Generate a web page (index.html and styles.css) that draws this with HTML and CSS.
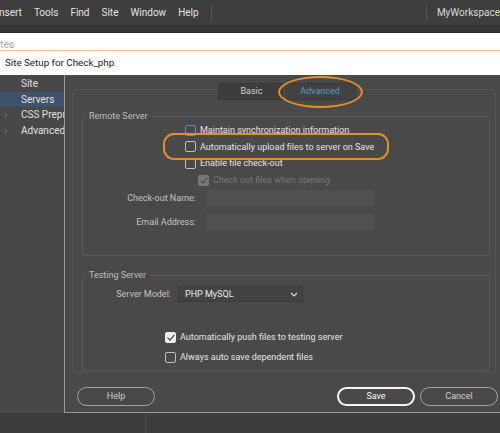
FILE: index.html
```html
<!DOCTYPE html>
<html>
<head>
<meta charset="utf-8">
<title>Site Setup for Check_php</title>
<link rel="stylesheet" href="styles.css">
</head>
<body>
	<div class="menubar">
		<span class="menu">nsert</span>
		<span class="menu">Tools</span>
		<span class="menu">Find</span>
		<span class="menu">Site</span>
		<span class="menu">Window</span>
		<span class="menu">Help</span>
		<span class="sep"></span>
		<span class="spacer"></span>
		<span class="sep"></span>
		<span class="workspace">MyWorkspace</span>
	</div>
	<div class="band"></div>
	<div class="panelname">tes</div>
	<div class="titlebar">Site Setup for Check_php</div>

	<div class="dialog">
		<ul class="sidebar">
			<li>Site</li>
			<li class="selected">Servers</li>
			<li><span class="chev">&#8250;</span>CSS Preprocessors</li>
			<li><span class="chev">&#8250;</span>Advanced Settings</li>
		</ul>

		<div class="main">
			<div class="tabpanel">
				<div class="tabs">
					<span class="tab">Basic</span>
					<span class="tab active">Advanced</span>
				</div>

				<fieldset class="group remote">
					<legend>Remote Server</legend>
					<div class="checks">
						<label class="check"><span class="box focus"></span>Maintain synchronization information</label>
						<label class="check"><span class="box"></span>Automatically upload files to server on Save</label>
						<label class="check"><span class="box"></span>Enable file check-out</label>
						<label class="check sub disabled"><span class="box on"></span>Check out files when opening</label>
					</div>
					<div class="field">
						<span class="fieldlabel">Check-out Name:</span>
						<span class="input"></span>
					</div>
					<div class="field">
						<span class="fieldlabel">Email Address:</span>
						<span class="input"></span>
					</div>
				</fieldset>

				<fieldset class="group testing">
					<legend>Testing Server</legend>
					<div class="field model">
						<span class="fieldlabel">Server Model:</span>
						<span class="select">PHP MySQL
							<svg width="8" height="5" viewBox="0 0 8 5"><path d="M1 1 L4 4 L7 1" fill="none" stroke="#ddd" stroke-width="1.2"/></svg>
						</span>
					</div>
					<div class="checks lower">
						<label class="check"><span class="box on"></span>Automatically push files to testing server</label>
						<label class="check"><span class="box"></span>Always auto save dependent files</label>
					</div>
				</fieldset>
			</div>

			<div class="buttons">
				<span class="btn">Help</span>
				<span class="grow"></span>
				<span class="btn primary">Save</span>
				<span class="btn">Cancel</span>
			</div>

			<!-- orange callouts drawn over the dialog -->
			<span class="mark mark-tab"></span>
			<span class="mark mark-upload"></span>
		</div>
	</div>

	<div class="footer">
		<span class="footleft"></span>
	</div>
</body>
</html>
```

FILE: styles.css
```css
html, body {
	margin: 0;
	padding: 0;
	width: 500px;
	height: 433px;
	overflow: hidden;
	background: #3d3d3d;
	font-family: Roboto, "Noto Sans", sans-serif;
}

.menubar {
	height: 25px;
	background: #3e3e3e;
	display: flex;
	align-items: center;
	color: #e2e2e2;
	font-size: 10px;
	white-space: nowrap;
}
.menu {
	margin-right: 12px;
}
.menu:first-child {
	margin-left: -1px;
}
.sep {
	width: 1px;
	height: 17px;
	background: #575757;
}
.spacer {
	flex: 1;
}
.workspace {
	margin-left: 10px;
	color: #d8d8d8;
}

.band {
	height: 7px;
	background: #333;
	border-bottom: 1px solid #2a2a2a;
}
.panelname {
	height: 17px;
	background: #fff;
	color: #a8a8a8;
	font-size: 10.5px;
	line-height: 24px;
	overflow: hidden;
	border-bottom: 1px solid #f1c79a;
}
.titlebar {
	height: 24px;
	line-height: 24px;
	background: #fff;
	color: #222;
	font-size: 9.8px;
	padding-left: 5px;
}

.dialog {
	display: flex;
	height: 338px;
}
.sidebar {
	list-style: none;
	margin: 0;
	padding: 0;
	width: 64px;
	flex: none;
	background: #474747;
	font-size: 10px;
	color: #e0e0e0;
	white-space: nowrap;
	overflow: hidden;
	padding-top: 1px;
}
.sidebar li {
	height: 15.5px;
	line-height: 15.5px;
	padding-left: 21px;
	position: relative;
	overflow: hidden;
	text-overflow: clip;
}
.sidebar li.selected {
	background: #41536b;
}
.chev {
	position: absolute;
	left: 4px;
	color: #777;
	font-size: 11px;
}

.main {
	position: relative;
	flex: 1;
	background: #494949;
	border-left: 1px solid #9a9a9a;
	border-bottom: 1px solid #9a9a9a;
	padding: 14px 0 0 7px;
	font-size: 9px;
	color: #c6c6c6;
}
.tabpanel {
	position: relative;
	width: 424px;
	height: 284px;
	border: 1px solid #565656;
	border-radius: 3px;
	box-sizing: border-box;
	padding: 21px 5px 0 9px;
}
.tabs {
	position: absolute;
	top: -7px;
	left: 145px;
	display: flex;
	border: 1px solid #3a3a3a;
	border-radius: 2px;
	background: #424242;
}
.tab {
	height: 15px;
	line-height: 15px;
	text-align: center;
	color: #cfcfcf;
	font-size: 9px;
}
.tab:first-child {
	width: 65px;
	background: #3d3d3d;
	border-right: 1px solid #555;
}
.tab.active {
	width: 70px;
	color: #4f98dc;
}

.group {
	margin: 0;
	border: 1px solid #5a5a5a;
	border-radius: 3px;
	padding: 0;
	min-width: 0;
}
.group legend {
	padding: 0 4px 0 3px;
	margin-left: 3px;
	color: #bdbdbd;
	font-size: 9px;
}
.remote {
	height: 145px;
	box-sizing: border-box;
	margin-bottom: 14px;
}
.testing {
	height: 101px;
	box-sizing: border-box;
}

.checks {
	display: flex;
	flex-direction: column;
	padding-left: 102px;
	padding-top: 1px;
}
.check {
	display: flex;
	align-items: center;
	height: 16.6px;
	color: #e4e4e4;
	white-space: nowrap;
}
.check.sub {
	padding-left: 13px;
}
.check.disabled {
	color: #7a7a7a;
}
.box {
	width: 9px;
	height: 9px;
	border: 1px solid #bdbdbd;
	border-radius: 2px;
	margin-right: 4px;
	position: relative;
	flex: none;
}
.box.focus {
	border-color: #5e8fc4;
}
.box.on {
	background: #ececec;
	border-color: #ececec;
}
.box.on:after {
	content: "";
	position: absolute;
	left: 3px;
	top: 0px;
	width: 2.5px;
	height: 6px;
	border: solid #333;
	border-width: 0 1.6px 1.6px 0;
	transform: rotate(40deg);
}
.disabled .box.on {
	background: #777;
	border-color: #777;
}
.disabled .box.on:after {
	border-color: #4a4a4a;
}

.field {
	display: flex;
	align-items: center;
	height: 24px;
}
.checks + .field {
	margin-top: -2px;
}
.fieldlabel {
	width: 123px;
	text-align: right;
	padding-right: 10px;
	box-sizing: border-box;
	color: #c2c2c2;
	white-space: nowrap;
}
.input {
	width: 169px;
	height: 16px;
	background: #515151;
	border-radius: 2px;
}

.model {
	margin-top: 4px;
	height: 20px;
}
.model .fieldlabel {
	width: 95px;
	padding-right: 7px;
}
.select {
	display: flex;
	align-items: center;
	justify-content: space-between;
	width: 125px;
	height: 16px;
	box-sizing: border-box;
	padding: 0 4px 0 6px;
	background: #434343;
	border: 1px solid #3b3b3b;
	color: #ececec;
}
.lower {
	padding-left: 82px;
	padding-top: 23px;
}
.lower .check {
	height: 20px;
}

.buttons {
	display: flex;
	align-items: center;
	padding: 14px 2px 0 5px;
}
.grow {
	flex: 1;
}
.btn {
	width: 78px;
	height: 19px;
	line-height: 17px;
	box-sizing: border-box;
	border: 1.5px solid #a3a3a3;
	border-radius: 10px;
	text-align: center;
	color: #cfcfcf;
	font-size: 9px;
	margin-left: 5px;
}
.btn:first-child {
	margin-left: 0;
}
.btn.primary {
	border: 2px solid #f4f4f4;
	color: #f6f6f6;
	line-height: 15px;
}

.mark {
	position: absolute;
	border: 2.5px solid #e88e27;
	box-sizing: border-box;
	pointer-events: none;
}
.mark-tab {
	left: 213px;
	top: 1px;
	width: 85px;
	height: 32px;
	border-radius: 50%;
}
.mark-upload {
	left: 98px;
	top: 58px;
	width: 226px;
	height: 27px;
	border-radius: 11px;
}

.footer {
	height: 20px;
	display: flex;
}
.footleft {
	width: 145px;
	border-right: 1px solid #4c4c4c;
	background: #3b3b3b;
}
```
